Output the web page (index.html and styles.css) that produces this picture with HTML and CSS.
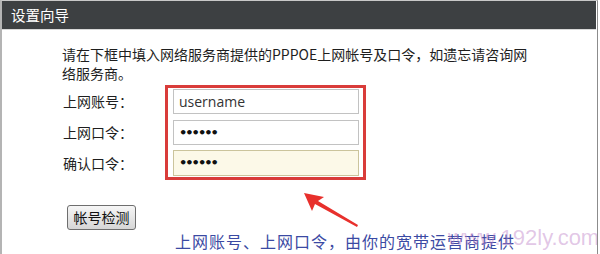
FILE: index.html
```html
<!DOCTYPE html>
<html lang="zh-CN">
<head>
<meta charset="utf-8">
<title>设置向导</title>
<link rel="stylesheet" href="styles.css">
</head>
<body>
<div class="window">
  <div class="header">设置向导</div>
  <div class="content">
    <p class="intro">请在下框中填入网络服务商提供的PPPOE上网帐号及口令，如遗忘请咨询网<br>络服务商。</p>
    <div class="form">
      <div class="labels">
        <div class="label">上网账号：</div>
        <div class="label">上网口令：</div>
        <div class="label">确认口令：</div>
      </div>
      <div class="redbox">
        <div class="field">username</div>
        <div class="field dots">••••••</div>
        <div class="field dots focus">••••••</div>
      </div>
    </div>
    <div class="btnrow"><button class="btn">帐号检测</button></div>
    <div class="note">上网账号、上网口令，由你的宽带运营商提供</div>
  </div>
  <svg class="arrow" width="70" height="45" viewBox="0 0 70 45">
    <path d="M4 2 L24 6 L18 10 L58 34 L57 36 L15 13 L12 20 Z" fill="#e8302c"/>
  </svg>
  <div class="watermark">www.192ly.com</div>
</div>
</body>
</html>
```
FILE: styles.css
```css
html, body {
  margin: 0;
  padding: 0;
  background: #fff;
}
body {
  font-family: "Noto Sans CJK SC", "Noto Sans", sans-serif;
  color: #1e1e1e;
}
.window {
  position: relative;
  width: 598px;
  height: 254px;
  box-sizing: border-box;
  border-left: 2px solid #b4b4b4;
  border-right: 1px solid #8c8c8c;
  border-top: 1px solid #c8c8c8;
  overflow: hidden;
}
.header {
  height: 28px;
  margin-right: 1px;
  background: #3d4042;
  color: #fff;
  font-size: 14.5px;
  line-height: 28px;
  padding-left: 9px;
  border-bottom: 1px solid #d8d8d8;
}
.content {
  padding-left: 60px;
}
.intro {
  margin: 15px 0 0 0;
  font-size: 14px;
  line-height: 19px;
}
.form {
  display: flex;
  margin-top: 2px;
}
.labels {
  width: 103px;
  display: flex;
  flex-direction: column;
  padding-top: 1px;
}
.label {
  height: 31px;
  line-height: 31px;
  font-size: 14px;
  padding-left: 1px;
}
.redbox {
  width: 186px;
  border: 3px solid #d93c3a;
  padding: 1px 4px 1px 5px;
  display: flex;
  flex-direction: column;
  gap: 6px;
}
.field {
  height: 23px;
  border: 1px solid #c2c2c2;
  background: #fff;
  font-family: "Open Sans", "Noto Sans", sans-serif;
  font-size: 14px;
  line-height: 23px;
  padding-left: 5px;
  color: #333;
}
.dots {
  font-family: "DejaVu Sans", sans-serif;
  font-size: 13px;
  font-weight: bold;
  letter-spacing: -2px;
  color: #111;
}
.focus {
  height: 24px;
  margin-top: -1px;
  background: #fcf9e8;
  border-color: #cbc49c;
}
.btnrow {
  padding-left: 5px;
  margin-top: 24px;
}
.btn {
  width: 69px;
  height: 25px;
  padding: 0;
  border: 1px solid #6e6e6e;
  border-radius: 3px;
  background: linear-gradient(#f6f6f6, #d6d6d6);
  font-family: "Noto Sans CJK SC", sans-serif;
  font-size: 14px;
  line-height: 22px;
  color: #111;
}
.note {
  padding-left: 113px;
  margin-top: 1px;
  font-size: 16px;
  letter-spacing: 1px;
  line-height: 20px;
  color: #3b4aa3;
}
.arrow {
  position: absolute;
  left: 298px;
  top: 190px;
}
.watermark {
  position: absolute;
  left: 446px;
  top: 224px;
  font-family: "Liberation Sans", sans-serif;
  font-size: 22px;
  color: rgba(190, 130, 200, 0.45);
}
```
